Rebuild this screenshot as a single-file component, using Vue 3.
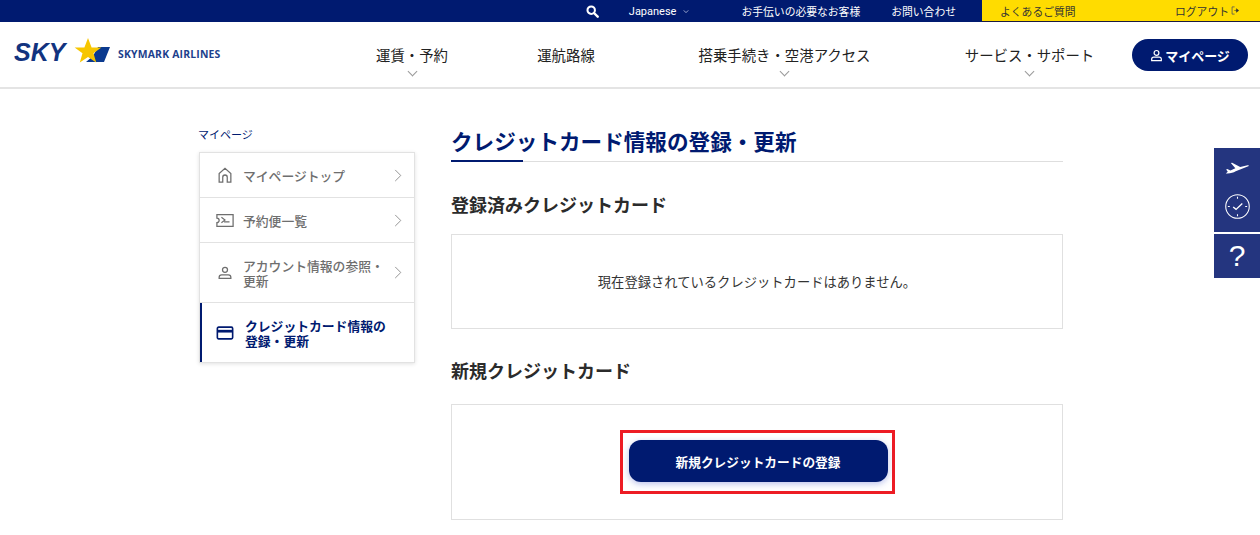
<template>
  <div class="page">
    <div class="topbar">
      <div class="top-left">
        <svg class="search" viewBox="0 0 14 14" width="13" height="13">
          <circle cx="5.6" cy="5.6" r="4" fill="none" stroke="#fff" stroke-width="2.2" />
          <path d="M8.6 8.6 12.6 12.6" stroke="#fff" stroke-width="2.6" stroke-linecap="round" />
        </svg>
        <span class="lang">Japanese</span>
        <svg class="lang-chev" viewBox="0 0 8 6" width="6" height="5">
          <path d="M1 1.5 4 4.5 7 1.5" fill="none" stroke="#cfd6ee" stroke-width="1" />
        </svg>
        <span class="help">お手伝いの必要なお客様</span>
        <span class="contact">お問い合わせ</span>
      </div>
      <div class="top-yellow">
        <span>よくあるご質問</span>
        <span class="logout">
          ログアウト
          <svg viewBox="0 0 10 10" width="9" height="9">
            <path d="M4 1H1.2V9H4" fill="none" stroke="#555" stroke-width="0.9" />
            <path d="M3.6 5H7M6 3 8.6 5 6 7Z" fill="#333" stroke="#333" stroke-width="0.6" />
          </svg>
        </span>
      </div>
    </div>

    <header class="nav">
      <div class="logo">
        <svg viewBox="0 0 100 32" width="100" height="32" class="logo-mark">
          <text x="0" y="26" class="logo-sky">SKY</text>
          <polygon points="84,12 96,12 90,27 72,27 79,21" fill="#0b3a8f" />
          <polygon points="74,3 77.6,12.4 87.4,12.4 79.5,18.3 82.2,27.5 74,22 65.8,27.5 68.5,18.3 60.6,12.4 70.4,12.4" fill="#f7c600" />
        </svg>
        <span class="logo-text">SKYMARK AIRLINES</span>
      </div>
      <div class="nav-item item-a">運賃・予約<i class="chev"></i></div>
      <div class="nav-item item-b">運航路線</div>
      <div class="nav-item item-c">搭乗手続き・空港アクセス<i class="chev"></i></div>
      <div class="nav-item item-d">サービス・サポート<i class="chev"></i></div>
      <button class="mypage">
        <svg viewBox="0 0 14 14" width="13" height="13">
          <circle cx="7" cy="4.2" r="2.6" fill="none" stroke="#fff" stroke-width="1.3" />
          <path d="M1.8 12.6V11c0-1.4 1-2.2 2.4-2.2h5.6c1.4 0 2.4.8 2.4 2.2v1.6Z" fill="none" stroke="#fff" stroke-width="1.3" />
        </svg>
        マイページ
      </button>
    </header>

    <div class="content">
      <aside>
        <div class="side-label">マイページ</div>
        <ul class="side">
          <li v-for="item in menu" :key="item.label" :class="{ active: item.active, tall: item.tall }">
            <svg class="side-icon" viewBox="0 0 20 20" width="18" height="18" v-html="item.icon"></svg>
            <span class="side-text">{{ item.label }}</span>
            <svg v-if="!item.active" class="side-chev" viewBox="0 0 8 14" width="8" height="13">
              <path d="M1 1 7 7 1 13" fill="none" stroke="#8c8c8c" stroke-width="1" />
            </svg>
          </li>
        </ul>
      </aside>

      <main>
        <h1>クレジットカード情報の登録・更新</h1>
        <h2 class="first">登録済みクレジットカード</h2>
        <div class="card empty">現在登録されているクレジットカードはありません。</div>
        <h2 class="second">新規クレジットカード</h2>
        <div class="card action">
          <div class="highlight">
            <button class="primary">新規クレジットカードの登録</button>
          </div>
        </div>
      </main>
    </div>

    <div class="rail">
      <div class="rail-top">
        <svg viewBox="0 0 30 16" width="27" height="15">
          <path d="M2 13.5c5 .4 8-.8 11-2.4l14-5.6c1-.6.4-1.4-.8-1.2L18 6.2 9 1.6 7.6 2l5 5.6-5.4 2.6L3.6 8.6 2.4 9l1.8 2.6Z" fill="#fff" />
        </svg>
        <svg viewBox="0 0 28 28" width="27" height="27">
          <circle cx="14" cy="14" r="12.2" fill="none" stroke="#fff" stroke-width="1.1" />
          <path d="M9.5 14.5 12.5 17 19 11" fill="none" stroke="#fff" stroke-width="1.4" />
          <path d="M14 4v2M14 22v2M4 14h2M22 14h2" stroke="#fff" stroke-width="1.1" />
        </svg>
      </div>
      <div class="rail-help">?</div>
    </div>
  </div>
</template>

<script setup>
const menu = [
  {
    label: 'マイページトップ',
    icon: '<path d="M3.5 18V8.5L10 2.5l6.5 6V18h-4v-5.5a2.5 2.5 0 0 0-5 0V18Z" fill="none" stroke="#6e6e6e" stroke-width="1.4"/>',
  },
  {
    label: '予約便一覧',
    icon: '<path d="M1 4h18v13H1v-4a2 2 0 0 0 0-5Z" fill="none" stroke="#6e6e6e" stroke-width="1.4"/><path d="M6 7l4 3-4 3M9 12h6" fill="none" stroke="#6e6e6e" stroke-width="1.3"/>',
  },
  {
    label: 'アカウント情報の参照・更新',
    tall: true,
    icon: '<circle cx="10" cy="6.5" r="2.8" fill="none" stroke="#6e6e6e" stroke-width="1.4"/><path d="M3.5 16v-1.2c0-1.6 1.2-2.6 2.8-2.6h7.4c1.6 0 2.8 1 2.8 2.6V16Z" fill="none" stroke="#6e6e6e" stroke-width="1.4"/>',
  },
  {
    label: 'クレジットカード情報の登録・更新',
    active: true,
    tall: true,
    icon: '<rect x="1.5" y="3.5" width="17" height="13" rx="1.4" fill="none" stroke="#001a70" stroke-width="1.8"/><rect x="1.5" y="6.5" width="17" height="3" fill="#001a70"/>',
  },
]
</script>

<style>
body {
  margin: 0;
  background: #fff;
}
</style>

<style scoped>
.page {
  width: 1260px;
  height: 535px;
  overflow: hidden;
  font-family: "Noto Sans CJK JP", "Noto Sans", sans-serif;
  color: #222;
  position: relative;
}
.topbar {
  height: 22px;
  background: #001a70;
  display: flex;
  justify-content: flex-end;
  color: #fff;
  font-size: 10.8px;
}
.top-left {
  display: flex;
  align-items: center;
}
.search {
  margin-right: 30px;
}
.lang {
  font-family: Roboto, sans-serif;
  font-size: 11px;
}
.lang-chev {
  margin: 0 52px 0 7px;
}
.help {
  margin-right: 31px;
}
.contact {
  margin-right: 26px;
}
.top-yellow {
  width: 278px;
  box-sizing: border-box;
  background: #ffdc00;
  border-bottom: 1px solid #1a1a40;
  color: #333;
  display: flex;
  align-items: center;
  justify-content: space-between;
  padding: 0 20px 0 18px;
}
.logout {
  display: flex;
  align-items: center;
  gap: 2px;
}
.nav {
  height: 66px;
  border-bottom: 2px solid #e4e4e4;
  box-sizing: border-box;
  height: 67px;
  display: flex;
  align-items: flex-start;
  font-size: 14.4px;
  color: #222;
}
.logo {
  display: flex;
  align-items: flex-end;
  margin: 13px 0 0 14px;
  width: 362px;
}
.logo-mark {
  display: block;
}
.logo-sky {
  font-family: "Liberation Sans", sans-serif;
  font-weight: 700;
  font-style: italic;
  font-size: 25px;
  letter-spacing: 0;
  fill: #12337f;
}
.logo-text {
  font-family: "Open Sans", sans-serif;
  font-weight: 700;
  font-size: 10.4px;
  color: #1d3f8c;
  margin: 0 0 6px 4px;
  letter-spacing: 0.2px;
  white-space: nowrap;
}
.nav-item {
  position: relative;
  padding-top: 22px;
  line-height: 21px;
  white-space: nowrap;
  text-align: center;
}
.item-a {
  width: 72px;
}
.item-b {
  width: 58px;
  margin-left: 89px;
}
.item-c {
  width: 173px;
  margin-left: 103px;
}
.item-d {
  width: 131px;
  margin-left: 93px;
}
.chev {
  display: block;
  width: 6px;
  height: 6px;
  border-right: 1px solid #9a9a9a;
  border-bottom: 1px solid #9a9a9a;
  transform: rotate(45deg);
  margin: 3px auto 0;
}
.mypage {
  margin: 17px 0 0 37px;
  width: 116px;
  height: 32px;
  border: none;
  border-radius: 16px;
  background: #001a70;
  color: #fff;
  font: 700 13px "Noto Sans CJK JP", sans-serif;
  display: flex;
  align-items: center;
  justify-content: center;
  gap: 2px;
  padding: 0;
}
.content {
  display: grid;
  grid-template-columns: 216px 612px;
  column-gap: 36px;
  margin-left: 199px;
  padding-top: 36px;
}
.side-label {
  font-size: 11px;
  line-height: 18px;
  color: #001a70;
  margin-left: -1px;
  margin-bottom: 9px;
}
.side {
  list-style: none;
  margin: 0;
  padding: 0;
  border: 1px solid #e2e2e2;
  box-shadow: 0 1px 4px rgba(0, 0, 0, 0.12);
}
.side li {
  height: 44px;
  display: flex;
  align-items: center;
  padding: 0 12px 0 16px;
  border-bottom: 1px solid #e2e2e2;
  color: #6e6e6e;
  font-size: 12.8px;
  font-weight: 500;
  line-height: 15px;
}
.side li.tall {
  height: 59px;
}
.side li:last-child {
  border-bottom: none;
}
.side li.active {
  color: #001a70;
  font-weight: 700;
  box-shadow: inset 2px 0 0 #001a70;
}
.side-icon {
  flex: none;
  margin-right: 9px;
}
.side-text {
  flex: 1;
}
.active .side-text {
  margin-left: 2px;
  padding-right: 14px;
}
.side-chev {
  flex: none;
  margin-left: 4px;
}
main {
  min-width: 0;
}
h1 {
  margin: 0;
  font-size: 21.6px;
  line-height: 32px;
  height: 36px;
  color: #001a70;
  font-weight: 700;
  border-bottom: 1px solid #dedede;
  position: relative;
  white-space: nowrap;
  padding-top: 0;
}
h1::after {
  content: "";
  position: absolute;
  left: 0;
  bottom: -1px;
  width: 72px;
  height: 2px;
  background: #001a70;
}
h2 {
  margin: 0;
  font-size: 18px;
  line-height: 26px;
  font-weight: 700;
  color: #2b2b2b;
}
h2.first {
  margin-top: 29px;
  margin-bottom: 17px;
}
h2.second {
  margin-top: 28px;
  margin-bottom: 21px;
}
.card {
  border: 1px solid #e0e0e0;
  box-sizing: border-box;
  display: flex;
  align-items: center;
  justify-content: center;
}
.empty {
  height: 95px;
  font-size: 13.3px;
  color: #333;
}
.action {
  height: 116px;
}
.highlight {
  border: 3px solid #ed1c24;
  padding: 7px 4px 9px 6px;
}
.primary {
  display: block;
  width: 259px;
  height: 42px;
  border: none;
  border-radius: 12px;
  background: #001a70;
  color: #fff;
  font: 700 12.7px "Noto Sans CJK JP", sans-serif;
  box-shadow: 0 2px 6px rgba(60, 80, 200, 0.35);
}
.rail {
  position: absolute;
  right: 0;
  top: 148px;
  width: 46px;
}
.rail-top {
  height: 84px;
  background: #24357f;
  display: flex;
  flex-direction: column;
  align-items: center;
  justify-content: space-around;
  padding: 4px 0;
  box-sizing: border-box;
}
.rail-help {
  margin-top: 2px;
  height: 44px;
  background: #24357f;
  color: #fff;
  font: 400 30px/44px "Liberation Sans", sans-serif;
  text-align: center;
}
</style>
